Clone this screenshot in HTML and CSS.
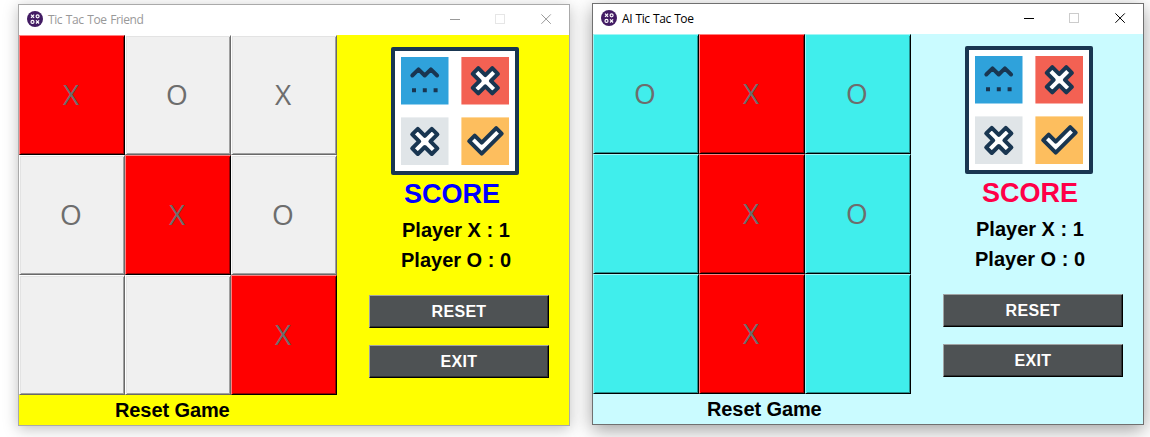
FILE: index.html
```
<!DOCTYPE html>
<html lang="en">
<head>
<meta charset="utf-8">
<title>Tic Tac Toe</title>
<link rel="stylesheet" href="styles.css">
</head>
<body>
<svg class="defs" width="0" height="0" aria-hidden="true">
  <symbol id="app-icon" viewBox="0 0 16 16">
    <circle cx="8" cy="8" r="8" fill="#421b63"/>
    <g fill="none" stroke="#fff" stroke-width="1.2">
      <path d="M4 3.7l3.1 3.2M7.1 3.7L4 6.9M9 9.3l3.1 3.2M12.1 9.3L9 12.5"/>
      <circle cx="10.6" cy="5.3" r="1.5"/>
      <circle cx="5.5" cy="10.9" r="1.5"/>
    </g>
  </symbol>
  <symbol id="logo" viewBox="0 0 128 128">
    <rect width="128" height="128" rx="2" fill="#193651"/>
    <rect x="4" y="4" width="120" height="120" fill="#fff"/>
    <rect x="10" y="10" width="47.5" height="47.5" fill="#2fa2db"/>
    <rect x="70.4" y="10" width="47.6" height="47.5" fill="#f36153"/>
    <rect x="10" y="70.4" width="47.5" height="47.6" fill="#e0e5e8"/>
    <rect x="70.4" y="70.4" width="47.6" height="47.6" fill="#fdbe5e"/>
    <path d="M21.3 28.5l6.2-6.2 6.2 6.2 6.2-6.2 6.2 6.2" fill="none" stroke="#193651" stroke-width="3.9" stroke-linecap="round" stroke-linejoin="round"/>
    <path d="M21 41.2h4v4h-4zM31.8 41.2h4v4h-4zM42.6 41.2h4v4h-4z" fill="#193651"/>
    <g fill="#fff" stroke="#193651" stroke-width="4" stroke-linejoin="round">
      <path d="M94.3 28.2l7-7 5.6 5.6-7 7 7 7-5.6 5.6-7-7-7 7-5.6-5.6 7-7-7-7 5.6-5.6z"/>
      <path d="M33.8 88.8l7-7 5.6 5.6-7 7 7 7-5.6 5.6-7-7-7 7-5.6-5.6 7-7-7-7 5.6-5.6z"/>
      <path d="M78.2 94.2l5.5-5.5 7 7 14.5-14.5 5.5 5.5-20 20z"/>
    </g>
  </symbol>
  <symbol id="controls" viewBox="0 0 102 10">
    <path d="M0 5.5h10M91.4 .4l9.4 9.4M100.8 .4l-9.4 9.4" fill="none" stroke="currentColor"/>
    <rect class="maximize" x="45.5" y=".5" width="9" height="9" fill="none"/>
  </symbol>
</svg>

<main class="desktop">
  <section class="window friend">
    <header class="titlebar">
      <svg class="app-icon"><use href="#app-icon"/></svg>
      <h1 class="title">Tic Tac Toe Friend</h1>
      <svg class="controls"><use href="#controls"/></svg>
    </header>
    <div class="client">
      <div class="play">
        <div class="board">
          <button class="cell win">X</button><button class="cell">O</button><button class="cell">X</button>
          <button class="cell">O</button><button class="cell win">X</button><button class="cell">O</button>
          <button class="cell"></button><button class="cell"></button><button class="cell win">X</button>
        </div>
        <p class="status">Reset Game</p>
      </div>
      <aside class="panel">
        <svg class="logo"><use href="#logo"/></svg>
        <h2 class="score">SCORE</h2>
        <p class="player">Player X : 1</p>
        <p class="player">Player O : 0</p>
        <button class="action">RESET</button>
        <button class="action">EXIT</button>
      </aside>
    </div>
  </section>

  <section class="window ai">
    <header class="titlebar">
      <svg class="app-icon"><use href="#app-icon"/></svg>
      <h1 class="title">AI Tic Tac Toe</h1>
      <svg class="controls"><use href="#controls"/></svg>
    </header>
    <div class="client">
      <div class="play">
        <div class="board">
          <button class="cell">O</button><button class="cell win">X</button><button class="cell">O</button>
          <button class="cell"></button><button class="cell win">X</button><button class="cell">O</button>
          <button class="cell"></button><button class="cell win">X</button><button class="cell"></button>
        </div>
        <p class="status">Reset Game</p>
      </div>
      <aside class="panel">
        <svg class="logo"><use href="#logo"/></svg>
        <h2 class="score">SCORE</h2>
        <p class="player">Player X : 1</p>
        <p class="player">Player O : 0</p>
        <button class="action">RESET</button>
        <button class="action">EXIT</button>
      </aside>
    </div>
  </section>
</main>
</body>
</html>
```
FILE: styles.css
```
* { box-sizing: border-box; }
body { margin: 0; background: #fff; overflow: hidden; }
.defs { display: block; }
h1, h2, p { margin: 0; }
button { margin: 0; padding: 0; border-radius: 0; }

.desktop {
  display: flex;
  align-items: flex-start;
  gap: 22px;
  height: 437px;
  padding: 3px 0 0 18px;
}
.window {
  flex: none;
  width: 552px;
  height: 422px;
  border: 1px solid #aaa;
}
.friend {
  --bg: #ff0;
  --cell: #f0f0f0;
  --light: #fff;
  --light-in: #e3e3e3;
  --dark: #696969;
  --dark-in: #a0a0a0;
  --accent: #00f;
  --max: #e6e6e6;
  color: #999;
  margin-top: 1px;
  box-shadow: 0 3px 14px rgba(0, 0, 0, .25);
}
.ai {
  --bg: #cafbff;
  --cell: #40eeec;
  --light: #9ff6f5;
  --light-in: #40eeec;
  --dark: #000;
  --dark-in: #268f8e;
  --accent: #ff0048;
  --max: #ccc;
  color: #000;
  border-color: #707070;
  box-shadow: 0 5px 18px rgba(0, 0, 0, .38);
}

.titlebar {
  display: flex;
  height: 30px;
  padding: 6px 17px 0 8px;
  background: #fff;
}
.app-icon { width: 16px; height: 16px; }
.title {
  flex: 1;
  padding-left: 5px;
  font: 400 12px/18px "Open Sans", "Noto Sans", sans-serif;
  letter-spacing: -.42px;
  word-spacing: 1px;
}
.ai .title { word-spacing: .7px; }
.controls { width: 102px; height: 10px; margin-top: 3px; }
.maximize { stroke: var(--max); }

.client { display: flex; height: 390px; background: var(--bg); }
.board {
  display: grid;
  grid-template: repeat(3, 120px) / repeat(3, 106px);
}
.cell {
  padding: 0 2px 2px 0;
  border: 1px solid;
  border-color: var(--light) var(--dark) var(--dark) var(--light);
  background: var(--cell);
  box-shadow: inset 1px 1px var(--light-in), inset -1px -1px var(--dark-in);
  color: #6d6d6d;
  font: 400 28px/38px "Open Sans", "Noto Sans", sans-serif;
}
.win {
  --cell: #f00;
  --light: #ff7f7f;
  --light-in: #f00;
  --dark: #000;
  --dark-in: #900;
}
.status {
  padding-left: 96px;
  color: #000;
  font: 700 20px/30px "Liberation Sans", Arial, sans-serif;
  letter-spacing: -.1px;
}
.ai .status { padding-left: 114px; }

.panel {
  display: flex;
  flex-direction: column;
  width: 232px;
  padding: 12px 20px 0 32px;
  color: #000;
  font-family: "Liberation Sans", Arial, sans-serif;
}
.logo { width: 128px; height: 128px; margin-left: 22px; }
.score {
  margin-left: 35px;
  color: var(--accent);
  font-size: 27px;
  line-height: 39px;
}
.ai .score { margin-left: 39px; }
.player {
  font-size: 20px;
  font-weight: 700;
  line-height: 30px;
  padding-left: 32px;
}
.score + .player { margin-top: 1px; padding-left: 33px; }
.action {
  width: 180px;
  height: 33px;
  margin-top: 17px;
  border: 1px solid;
  border-color: #a0a3a4 #000 #000 #a0a3a4;
  background: #4e5254;
  box-shadow: inset -1px -1px #2f3132;
  color: #fff;
  font: 700 16px/31px "Liberation Sans", Arial, sans-serif;
  letter-spacing: .3px;
}
.player + .action { margin-top: 20px; }
```
